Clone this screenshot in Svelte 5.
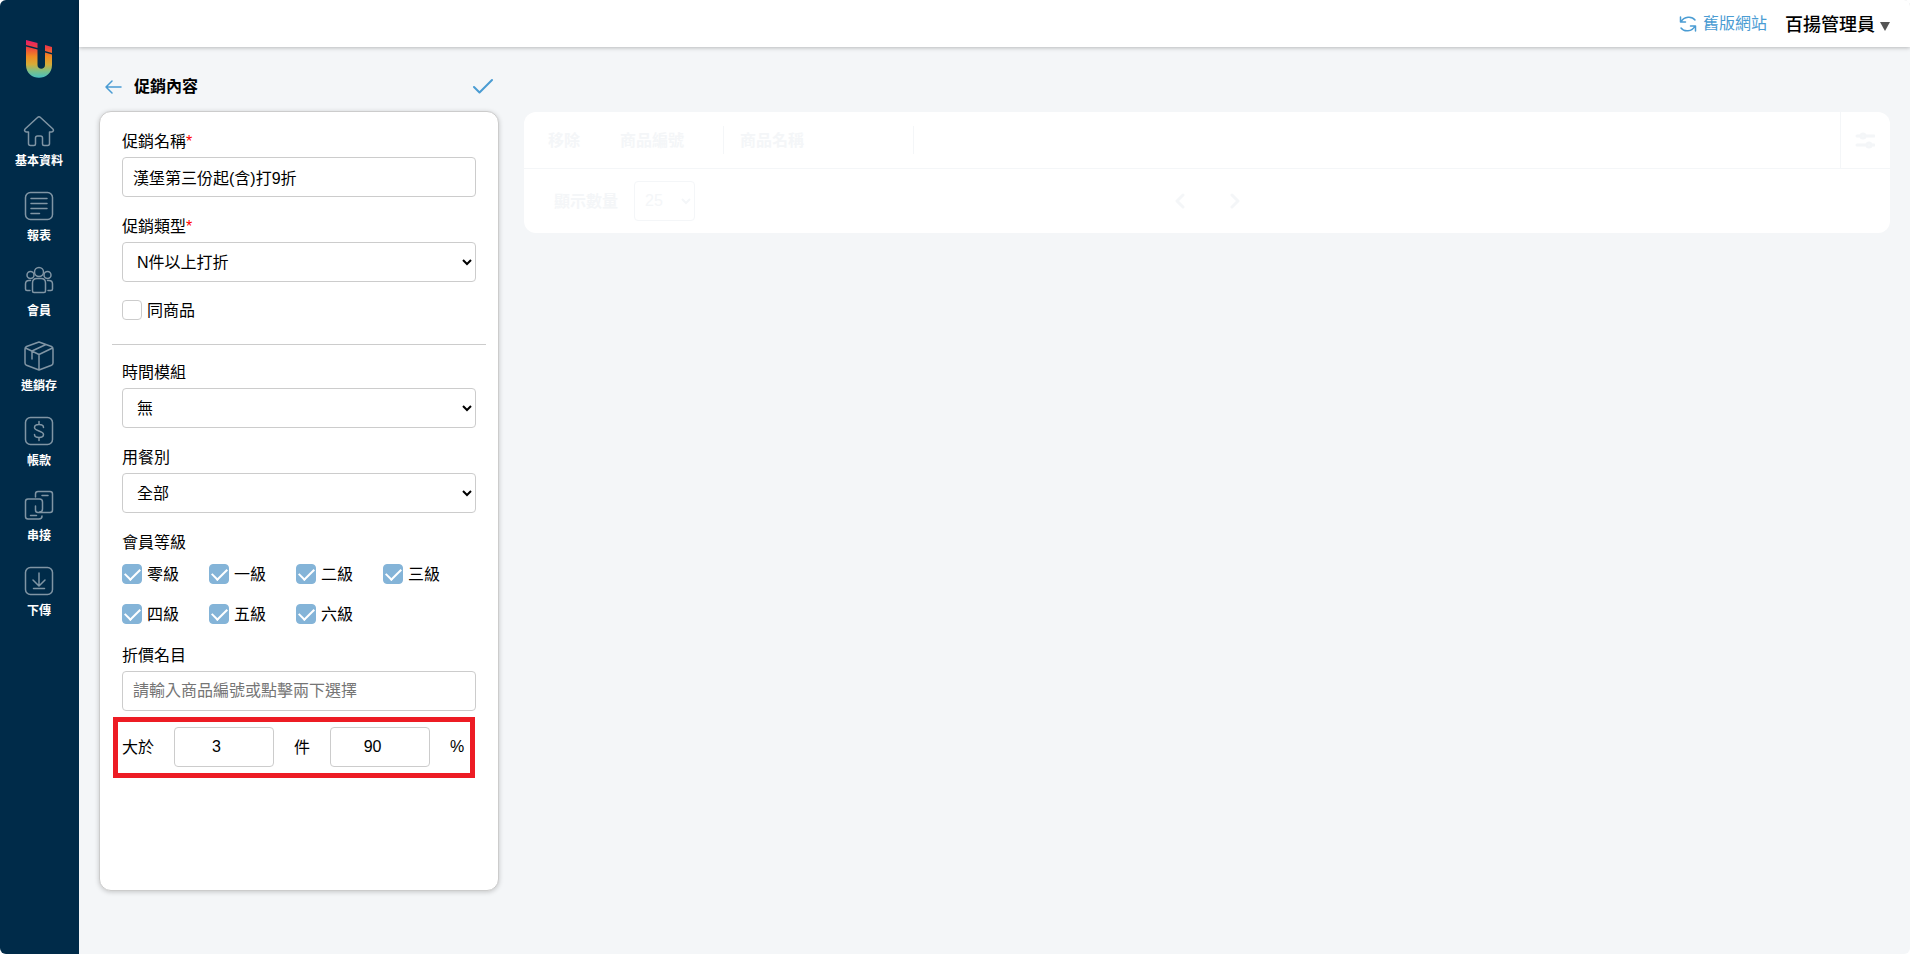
<script>
	import { onMount } from 'svelte';

	const menu = [
		{ icon: 'home', title: '基本資料' },
		{ icon: 'report', title: '報表' },
		{ icon: 'member', title: '會員' },
		{ icon: 'stock', title: '進銷存' },
		{ icon: 'account', title: '帳款' },
		{ icon: 'link', title: '串接' },
		{ icon: 'download', title: '下傳' }
	];

	let levels = [
		{ title: '零級', checked: true },
		{ title: '一級', checked: true },
		{ title: '二級', checked: true },
		{ title: '三級', checked: true },
		{ title: '四級', checked: true },
		{ title: '五級', checked: true },
		{ title: '六級', checked: true }
	];

	let name = '漢堡第三份起(含)打9折';
	let type = 'N件以上打折';
	let sameProduct = false;
	let timeModule = '無';
	let dining = '全部';
	let discountItem = '';
	let count = 3;
	let percent = 90;
	let pageSize = 25;

	onMount(() => {
		document.title = '促銷內容';
	});
</script>

<div class="app">
	<aside>
		<a href="#top" class="logo" aria-label="首頁">
			<svg width="28" height="40" viewBox="0 0 28 40">
				<defs>
					<linearGradient id="logo-color" gradientUnits="userSpaceOnUse" x1="0" y1="0" x2="0" y2="39">
						<stop offset="0" stop-color="#e6176f" />
						<stop offset="0.22" stop-color="#ee4140" />
						<stop offset="0.45" stop-color="#f08a22" />
						<stop offset="0.65" stop-color="#d5ac38" />
						<stop offset="0.82" stop-color="#7dbf85" />
						<stop offset="1" stop-color="#45bfc3" />
					</linearGradient>
				</defs>
				<g fill="url(#logo-color)">
					<path d="M1 1l11.500 3v5L1 6z" />
					<path d="M20 6l7 2v6l-7-2z" />
					<path d="M1 7.500l11.500 3V26c0 5 7.500 5 7.500 0V13.500l7 2V26c0 17-26 17-26 0z" />
				</g>
			</svg>
		</a>
		<nav>
			{#each menu as m}
				<a href="#{m.icon}">
					<svg width="32" height="32" viewBox="0 0 32 32">
						{#if m.icon == 'home'}
							<path d="M5.500 17H3.500c-2 0-2.500-2-1.200-3.200L14.500 2.500q1.500-1.500 3 0l12.200 11.300c1.300 1.200.8 3.200-1.200 3.200h-2v11.500q0 2-2 2H21q-1.500 0-1.500-1.500v-6q0-2-2-2h-3q-2 0-2 2v6q0 1.500-1.500 1.500H7.500q-2 0-2-2z" />
						{:else if m.icon == 'report'}
							<rect x="2.500" y="2.500" width="27" height="27" rx="5" />
							<path d="M8 8.500h16M8 13.500h16M8 18.500h16M8 23.500h8.500" />
						{:else if m.icon == 'member'}
							<circle cx="16" cy="7" r="4.500" />
							<circle cx="7.500" cy="10" r="3.500" />
							<circle cx="24.500" cy="10" r="3.500" />
							<path d="M9.500 26v-8q0-4.500 4.500-4.500h4q4.500 0 4.500 4.500v8q0 1.500-1.500 1.500H11q-1.500 0-1.500-1.500zM7.500 15.500H6q-3.500 0-3.500 3.500v5q0 1.500 1.500 1.500h3M24.500 15.500H26q3.500 0 3.500 3.500v5q0 1.500-1.500 1.500h-3" />
						{:else if m.icon == 'stock'}
							<path d="M16 2L28.500 6.500q1.500.7 1.500 2.500v14q0 1.500-1.500 2.200L16 30 3.500 25.200Q2 24.500 2 23V9q0-1.800 1.500-2.500zM2.500 8L16 14.500 29.500 8M16 14.500V30M9 11v8M9 11L23 4.500" />
						{:else if m.icon == 'account'}
							<rect x="2.500" y="2.500" width="27" height="27" rx="5" />
							<path d="M16 6.500v3M16 22.500v3M20.500 12.500c0-4-9-4-9 0s9 3 9 7-9 4-9 0" />
						{:else if m.icon == 'link'}
							<path d="M19.500 14v5q0 3-3 3M12.500 7V4q0-2.500 2.500-2.500h12q2.500 0 2.500 2.500v16q0 2.500-2.500 2.500H15q-2.500 0-2.500-2.500v-4M19 5.500h6M19.500 18v-6q0-3-3-3H5Q2.500 9 2.500 11.500v15Q2.500 29 5 29h11q3 0 3-3M7.500 25.500h6" />
						{:else}
							<rect x="2.500" y="2.500" width="27" height="27" rx="5" />
							<path d="M16 8v12.500M10 15l6 6 6-6M10.500 23.500h11" />
						{/if}
					</svg>
					{m.title}
				</a>
			{/each}
		</nav>
	</aside>

	<div class="page">
		<header>
			<a href="#old" class="old-site">
				<svg width="18" height="18" viewBox="0 0 18 18">
					<path d="M2 7c3-6 11-6 14-2M1.500 2v5h5M16 11c-3 6-11 6-14 2M16.500 16v-5h-5" />
				</svg>
				舊版網站
			</a>
			<button class="user">百揚管理員<i></i></button>
		</header>

		<main>
			<section class="promo">
				<div class="promo-title">
					<button aria-label="返回">
						<svg width="18" height="16" viewBox="0 0 18 16"><path d="M16 8H1M7 2L1 8l6 6" /></svg>
					</button>
					<h1>促銷內容</h1>
					<button aria-label="儲存">
						<svg class="save" width="22" height="18" viewBox="0 0 22 18"><path d="M3 9l5.500 5.500L21 2" /></svg>
					</button>
				</div>

				<form class="card">
					<div class="field">
						<label for="name">促銷名稱<em>*</em></label>
						<input id="name" type="text" bind:value={name} />
					</div>
					<div class="field">
						<label for="type">促銷類型<em>*</em></label>
						<select id="type" bind:value={type}>
							<option>N件以上打折</option>
						</select>
					</div>
					<label class="check">
						<input type="checkbox" bind:checked={sameProduct} />
						同商品
					</label>
					<hr />
					<div class="field">
						<label for="time">時間模組</label>
						<select id="time" bind:value={timeModule}>
							<option>無</option>
						</select>
					</div>
					<div class="field">
						<label for="dining">用餐別</label>
						<select id="dining" bind:value={dining}>
							<option>全部</option>
						</select>
					</div>
					<div class="levels-title" id="levels">會員等級</div>
					<div class="levels" role="group" aria-labelledby="levels">
						{#each levels as l}
							<label class="check">
								<input type="checkbox" bind:checked={l.checked} />
								{l.title}
							</label>
						{/each}
					</div>
					<div class="field">
						<label for="discount">折價名目</label>
						<input
							id="discount"
							type="text"
							placeholder="請輸入商品編號或點擊兩下選擇"
							bind:value={discountItem}
						/>
					</div>
					<div class="rule">
						<label for="count">大於</label>
						<input id="count" type="number" bind:value={count} />
						<label for="percent">件</label>
						<input id="percent" type="number" bind:value={percent} />
						<span>%</span>
					</div>
				</form>
			</section>

			<section class="products">
				<table>
					<thead>
						<tr>
							<th class="remove">移除</th>
							<th class="code"><div>商品編號</div></th>
							<th class="title"><div>商品名稱</div></th>
							<th></th>
							<th class="setting">
								<button aria-label="欄位設定">
									<svg width="20" height="18" viewBox="0 0 20 18">
										<path d="M2 5h4M10 5h9M2 14h9M16 14h3" />
										<circle cx="8" cy="5" r="2" />
										<circle cx="14" cy="14" r="2" />
									</svg>
								</button>
							</th>
						</tr>
					</thead>
				</table>
				<div class="pager">
					<div class="size">
						<label for="size">顯示數量</label>
						<select id="size" bind:value={pageSize}>
							<option value={25}>25</option>
						</select>
					</div>
					<div class="arrows">
						<button aria-label="上一頁">
							<svg width="10" height="16" viewBox="0 0 10 16"><path d="M8 2L2 8l6 6" /></svg>
						</button>
						<button aria-label="下一頁">
							<svg width="10" height="16" viewBox="0 0 10 16"><path d="M2 2l6 6-6 6" /></svg>
						</button>
					</div>
				</div>
			</section>
		</main>
	</div>
</div>

<style>
	:global(body) {
		background: #fff;
		font-family: 'Liberation Sans', 'Noto Sans CJK TC', sans-serif;
		font-size: 16px;
		line-height: 24px;
		color: #000;
	}

	* {
		box-sizing: border-box;
	}

	a {
		text-decoration: none;
	}

	button {
		padding: 0;
		border: none;
		background: none;
		font: inherit;
		cursor: pointer;
	}

	svg {
		display: block;
		fill: none;
		stroke-linecap: round;
		stroke-linejoin: round;
	}

	.app {
		display: flex;
		min-height: 100vh;
		border-radius: 6px;
		overflow: hidden;
		background: #f4f6f8;
	}

	aside {
		flex: none;
		width: 79px;
		padding: 39px 1px 0 0;
		background: #002b49;
	}

	.logo {
		display: flex;
		justify-content: center;
		margin-bottom: 36px;
	}

	nav {
		display: flex;
		flex-direction: column;
		gap: 20px;
	}

	nav a {
		display: flex;
		flex-direction: column;
		align-items: center;
		gap: 5px;
		font-size: 12px;
		line-height: 18px;
		font-weight: 700;
		color: #fff;
	}

	nav svg {
		stroke: #8095a4;
		stroke-width: 1.5;
	}

	.page {
		flex: 1;
		min-width: 0;
		display: flex;
		flex-direction: column;
	}

	header {
		display: flex;
		justify-content: flex-end;
		align-items: center;
		gap: 18px;
		height: 47px;
		padding-right: 20px;
		background: #fff;
		box-shadow: 0 1px 4px rgba(0, 0, 0, 0.25);
	}

	.old-site {
		display: flex;
		align-items: center;
		gap: 6px;
		color: #4a9cd3;
	}

	.old-site svg {
		stroke: #4a9cd3;
		stroke-width: 1.5;
	}

	.user {
		display: flex;
		align-items: center;
		gap: 5px;
		padding-top: 2px;
		font-size: 18px;
		font-weight: 500;
		color: #000;
	}

	.user i {
		margin-top: 3px;
		border: 5px solid transparent;
		border-top: 9px solid #555;
		border-bottom: none;
	}

	main {
		flex: 1;
		display: flex;
		align-items: stretch;
		gap: 25px;
		padding: 28px 20px 63px;
	}

	.promo {
		flex: none;
		width: 400px;
		display: flex;
		flex-direction: column;
		gap: 12px;
	}

	.promo-title {
		display: flex;
		align-items: center;
		gap: 11px;
		padding: 0 6px;
	}

	.promo-title svg {
		stroke: #4a9cd3;
		stroke-width: 1.5;
	}

	.promo-title .save {
		stroke-width: 2;
	}

	h1 {
		flex: 1;
		margin: 0;
		font-size: 16px;
		font-weight: 700;
	}

	.card {
		flex: 1;
		padding: 18px 22px;
		border: 1px solid #ccc;
		border-radius: 12px;
		background: #fff;
		box-shadow: 0 1px 5px rgba(0, 0, 0, 0.2);
	}

	.field {
		display: flex;
		flex-direction: column;
		gap: 3px;
		margin-bottom: 18px;
	}

	em {
		font-style: normal;
		color: #f00;
	}

	input,
	select {
		height: 40px;
		border: 1px solid #ccc;
		border-radius: 4px;
		background: #fff;
		font: inherit;
		color: #000;
	}

	input {
		padding: 0 10px;
	}

	input::placeholder {
		color: #757575;
	}

	select {
		padding: 0 0 0 10px;
	}

	.check {
		display: flex;
		align-items: center;
		gap: 5px;
		height: 22px;
	}

	.check input {
		appearance: none;
		display: grid;
		place-items: center;
		width: 20px;
		height: 20px;
		margin: 0 0 2px;
		padding: 0;
	}

	.check input:checked {
		border-color: #84b4d8;
		background: #84b4d8;
	}

	.check input:checked::before {
		content: '';
		width: 13px;
		height: 7px;
		margin-bottom: 4px;
		border: solid #fff;
		border-width: 0 0 2px 2px;
		transform: rotate(-45deg);
	}

	hr {
		margin: 22px -10px 16px;
		border: none;
		border-top: 1px solid #ccc;
	}

	.levels-title {
		margin-bottom: 9px;
	}

	.levels {
		display: grid;
		grid-template-columns: repeat(4, 87px);
		gap: 18px 0;
		margin-bottom: 18px;
	}

	.rule {
		position: relative;
		display: flex;
		align-items: center;
		gap: 20px;
		margin-top: -2px;
	}

	.rule label {
		padding-top: 2px;
	}

	.rule input {
		width: 100px;
		padding: 0;
		text-align: center;
	}

	/* keeps the spinner's room, so the number sits left of centre */
	.rule input::-webkit-inner-spin-button {
		opacity: 0;
	}

	.rule::after {
		content: '';
		position: absolute;
		inset: -10px 1px -11px -9px;
		border: 5px solid #ed1c24;
		pointer-events: none;
	}

	.products {
		flex: 1;
		align-self: flex-start;
		margin-top: 37px;
		border-radius: 12px;
		background: #fff;
		color: #f4f6f8;
	}

	table {
		width: 100%;
		border-collapse: collapse;
		table-layout: fixed;
	}

	th {
		height: 56px;
		padding: 0;
		border-bottom: 1px solid #f4f6f8;
		text-align: left;
		font-weight: 700;
	}

	th div {
		height: 28px;
		line-height: 30px;
		border-right: 1px solid #f4f6f8;
	}

	.remove {
		width: 96px;
		padding: 2px 0 0 24px;
	}

	.code {
		width: 104px;
	}

	.title {
		width: 190px;
		padding-left: 16px;
	}

	.setting {
		width: 50px;
		border-left: 1px solid #f4f6f8;
	}

	.setting button {
		display: flex;
		margin: 0 auto;
	}

	.products svg {
		stroke: #f4f6f8;
		stroke-width: 3;
	}

	.pager {
		display: grid;
		grid-template-columns: 1fr auto 1fr;
		align-items: center;
		height: 64px;
		padding: 0 30px;
	}

	.size {
		display: flex;
		align-items: center;
		gap: 16px;
		font-weight: 700;
	}

	.size label {
		padding-top: 2px;
	}

	.size select {
		width: 61px;
		padding-left: 6px;
		border-color: #f4f6f8;
		color: #f4f6f8;
		font-weight: 400;
	}

	.arrows {
		display: flex;
		gap: 45px;
	}
</style>
